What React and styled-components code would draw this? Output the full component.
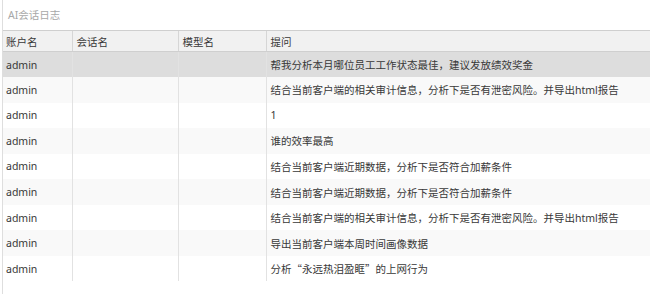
import React from "react";
import styled, { createGlobalStyle } from "styled-components";

const Global = createGlobalStyle`
  html, body { margin: 0; padding: 0; background: #fff; }
  body { font-family: "Noto Sans", "Noto Sans CJK SC", sans-serif; overflow: hidden; }
`;

const Panel = styled.div`
  margin-left: 2px;
  border-left: 1px solid #dedede;
  height: 294px;
  box-sizing: border-box;
  overflow: hidden;
`;

const Title = styled.div`
  height: 30px;
  padding-left: 5px;
  display: flex;
  align-items: center;
  font-size: 10.5px;
  color: #a8a8a8;
  box-sizing: border-box;
  padding-bottom: 2px;
`;

const Table = styled.table`
  border-collapse: collapse;
  table-layout: fixed;
  width: 100%;
  font-size: 10.5px;
  color: #383838;
`;

const Col = styled.col`
  width: ${(p) => (p.$w ? `${p.$w}px` : "auto")};
`;

const HeadCell = styled.th`
  height: 20px;
  padding: 0 0 0 4px;
  text-align: left;
  font-weight: normal;
  background: #f1f1f1;
  border-top: 1px solid #cfcfcf;
  border-bottom: 1px solid #cfcfcf;
  border-left: 1px solid #d6d6d6;
  &:first-child { border-left: none; padding-left: 3px; }
  white-space: nowrap;
`;

const Row = styled.tr`
  height: 25.56px;
  background: ${(p) => (p.$selected ? "#dddddd" : p.$odd ? "#f9f9f9" : "#ffffff")};
`;

const Cell = styled.td`
  padding: 0 0 0 4px;
  border-left: 1px solid #e2e2e2;
  white-space: nowrap;
  overflow: hidden;
  &:first-child { border-left: none; padding-left: 3px; }
`;

const Quote = styled.span`
  font-family: "Noto Sans CJK SC", sans-serif;
`;

const rows = [
  "帮我分析本月哪位员工工作状态最佳，建议发放绩效奖金",
  "结合当前客户端的相关审计信息，分析下是否有泄密风险。并导出html报告",
  "1",
  "谁的效率最高",
  "结合当前客户端近期数据，分析下是否符合加薪条件",
  "结合当前客户端近期数据，分析下是否符合加薪条件",
  "结合当前客户端的相关审计信息，分析下是否有泄密风险。并导出html报告",
  "导出当前客户端本周时间画像数据",
  <>分析<Quote>“永远热泪盈眶”</Quote>的上网行为</>,
];

export default function App() {
  return (
    <>
      <Global />
      <Panel>
        <Title>AI会话日志</Title>
        <Table>
          <colgroup>
            <Col $w={69} />
            <Col $w={106} />
            <Col $w={88} />
            <Col />
          </colgroup>
          <thead>
            <tr>
              <HeadCell>账户名</HeadCell>
              <HeadCell>会话名</HeadCell>
              <HeadCell>模型名</HeadCell>
              <HeadCell>提问</HeadCell>
            </tr>
          </thead>
          <tbody>
            {rows.map((q, i) => (
              <Row key={i} $selected={i === 0} $odd={i % 2 === 1}>
                <Cell>admin</Cell>
                <Cell />
                <Cell />
                <Cell>{q}</Cell>
              </Row>
            ))}
          </tbody>
        </Table>
      </Panel>
    </>
  );
}
